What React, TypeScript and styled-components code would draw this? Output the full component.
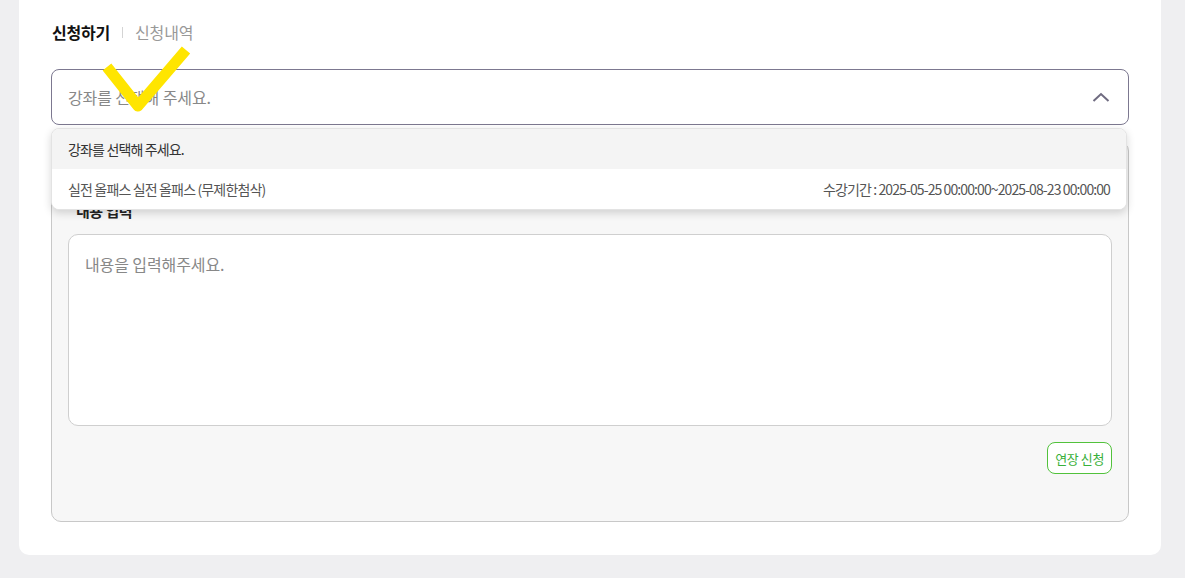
import React from "react";
import styled, { createGlobalStyle } from "styled-components";

const Global = createGlobalStyle`
  html, body { margin: 0; padding: 0; background: #efeff1; }
  body { font-family: "Noto Sans CJK KR", "Noto Sans", sans-serif; color: #222; }
  * { box-sizing: border-box; }
`;

const Page = styled.div`
  width: 1185px;
  height: 578px;
  overflow: hidden;
  position: relative;
`;

const Card = styled.div`
  margin-left: 19px;
  width: 1142px;
  background: #fff;
  border-radius: 0 0 10px 10px;
  padding: 20px 32px 33px;
  display: flex;
  flex-direction: column;
`;

const Tabs = styled.div`
  display: flex;
  align-items: center;
  height: 24px;
  gap: 12px;
  margin-left: 1px;
`;

const Tab = styled.span<{ $active?: boolean }>`
  font-size: 16px;
  line-height: 24px;
  letter-spacing: -0.2px;
  font-weight: ${(p) => (p.$active ? 700 : 400)};
  color: ${(p) => (p.$active ? "#111" : "#999")};
`;

const Sep = styled.span`
  width: 1px;
  height: 11px;
  background: #d4d4d4;
`;

const SelectWrap = styled.div`
  position: relative;
  margin-top: 25px;
`;

const SelectBox = styled.div`
  height: 56px;
  border: 1px solid #7c7890;
  border-radius: 8px;
  display: flex;
  align-items: center;
  justify-content: space-between;
  padding: 0 18px 0 16px;
  background: #fff;
`;

const Placeholder = styled.span`
  font-size: 16px;
  color: #888;
  letter-spacing: -0.1px;
`;

const Menu = styled.div`
  position: absolute;
  top: 59px;
  left: 0;
  width: 1076px;
  background: #fff;
  border: 1px solid #e3e3e3;
  border-radius: 8px;
  box-shadow: 0 3px 8px rgba(0, 0, 0, 0.16);
  overflow: hidden;
  z-index: 2;
`;

const Option = styled.div<{ $active?: boolean }>`
  height: 40px;
  display: flex;
  align-items: center;
  justify-content: space-between;
  padding: 0 16px;
  font-size: 14px;
  letter-spacing: -0.85px;
  background: ${(p) => (p.$active ? "#f4f4f4" : "#fff")};
  color: ${(p) => (p.$active ? "#333" : "#555")};
`;

const Period = styled.span`
  letter-spacing: -0.9px;
  color: #555;
`;

const Panel = styled.div`
  margin-top: 16px;
  height: 381px;
  background: #f7f7f7;
  border: 1px solid #c8c8c8;
  border-radius: 10px;
  padding: 58px 16px 0;
  display: flex;
  flex-direction: column;
`;

const Label = styled.div`
  font-size: 15px;
  font-weight: 700;
  color: #222;
  line-height: 22px;
  padding-left: 8px;
  letter-spacing: -0.5px;
`;

const TextArea = styled.div`
  margin-top: 12px;
  height: 192px;
  background: #fff;
  border: 1px solid #cfcfcf;
  border-radius: 10px;
  padding: 17px 16px;
  font-size: 16px;
  color: #888;
  letter-spacing: -0.1px;
`;

const Actions = styled.div`
  display: flex;
  justify-content: flex-end;
  margin-top: 16px;
`;

const GreenButton = styled.button`
  height: 32px;
  padding: 0 7px;
  border: 1px solid #52c23c;
  border-radius: 8px;
  background: #fff;
  color: #38b03a;
  font-family: "Noto Sans CJK KR", sans-serif;
  font-size: 13px;
  letter-spacing: -0.4px;
`;

const Check = styled.svg`
  position: absolute;
  left: 100px;
  top: 40px;
  pointer-events: none;
  z-index: 5;
`;

export default function App() {
  return (
    <Page>
      <Global />
      <Card>
        <Tabs>
          <Tab $active>신청하기</Tab>
          <Sep />
          <Tab>신청내역</Tab>
        </Tabs>
        <SelectWrap>
          <SelectBox>
            <Placeholder>강좌를 선택해 주세요.</Placeholder>
            <svg width="18" height="10" viewBox="0 0 18 10" fill="none">
              <path d="M1.5 9 L9 2 L16.5 9" stroke="#6f6b80" strokeWidth="2" />
            </svg>
          </SelectBox>
          <Menu>
            <Option $active>강좌를 선택해 주세요.</Option>
            <Option>
              <span>실전 올패스 실전 올패스 (무제한첨삭)</span>
              <Period>수강기간 : 2025-05-25 00:00:00~2025-08-23 00:00:00</Period>
            </Option>
          </Menu>
        </SelectWrap>
        <Panel>
          <Label>내용 입력</Label>
          <TextArea>내용을 입력해주세요.</TextArea>
          <Actions>
            <GreenButton>연장 신청</GreenButton>
          </Actions>
        </Panel>
      </Card>
      <Check width="100" height="80" viewBox="0 0 100 80">
        <path d="M7 27 L38 66 L86 10" stroke="#ffe500" strokeWidth="11" fill="none" strokeLinejoin="round" />
      </Check>
    </Page>
  );
}
